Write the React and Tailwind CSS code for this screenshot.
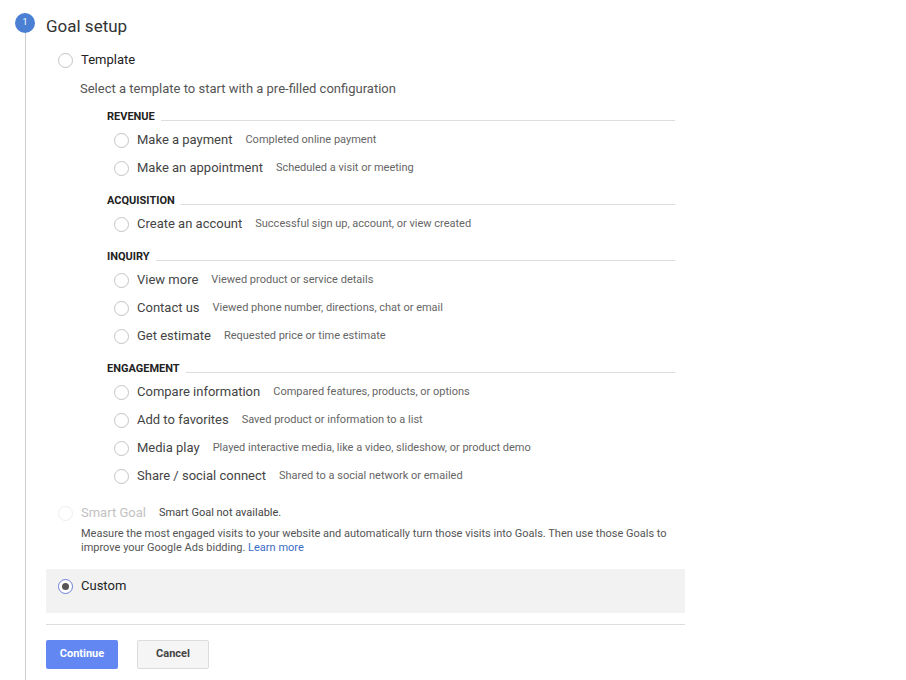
import React from "react";

const groups = [
  {
    title: "REVENUE",
    items: [
      ["Make a payment", "Completed online payment"],
      ["Make an appointment", "Scheduled a visit or meeting"],
    ],
  },
  {
    title: "ACQUISITION",
    items: [["Create an account", "Successful sign up, account, or view created"]],
  },
  {
    title: "INQUIRY",
    items: [
      ["View more", "Viewed product or service details"],
      ["Contact us", "Viewed phone number, directions, chat or email"],
      ["Get estimate", "Requested price or time estimate"],
    ],
  },
  {
    title: "ENGAGEMENT",
    items: [
      ["Compare information", "Compared features, products, or options"],
      ["Add to favorites", "Saved product or information to a list"],
      ["Media play", "Played interactive media, like a video, slideshow, or product demo"],
      ["Share / social connect", "Shared to a social network or emailed"],
    ],
  },
];

// plain radio circle
const Radio = ({ checked, disabled }) => (
  <span
    className={
      "flex h-[15px] w-[15px] shrink-0 items-center justify-center rounded-full border bg-white " +
      (checked ? "border-[#6b7fd6]" : disabled ? "border-[#eeeeee]" : "border-[#c4c4c4]")
    }
  >
    {checked && <span className="h-[7px] w-[7px] rounded-full bg-[#555]" />}
  </span>
);

export default function App() {
  return (
    <div
      className="flex min-h-[680px] w-[906px] bg-white text-[#333]"
      style={{ fontFamily: "Roboto, 'Liberation Sans', sans-serif" }}
    >
      {/* step marker + line */}
      <div className="flex w-[46px] shrink-0 flex-col">
        <div className="ml-[15px] mt-[13px] flex h-[20px] w-[20px] items-center justify-center rounded-full bg-[#4a7fd3] text-[9px] text-white">
          1
        </div>
        <div className="ml-[25px] w-px flex-1 bg-[#cccccc]" />
      </div>

      <div className="w-[639px] pt-[15px]">
        <div className="flex h-[24px] items-center text-[17px] text-[#333]">Goal setup</div>

        {/* template */}
        <div className="mt-[11px] flex h-[20px] items-center gap-[8px] pl-[12px]">
          <Radio />
          <span className="text-[13px] text-[#222]">Template</span>
        </div>
        <div className="mt-[10px] flex h-[18px] items-center pl-[34px] text-[13px] text-[#555]">
          Select a template to start with a pre-filled configuration
        </div>

        <div className="pl-[61px] pr-[10px]">
          {groups.map((g) => (
            <div key={g.title} className="mt-[10px]">
              <div className="flex h-[18px] items-center gap-[6px]">
                <span className="text-[11px] font-bold text-[#222]">{g.title}</span>
                <span className="mt-[7px] h-px flex-1 bg-[#dddddd]" />
              </div>
              {g.items.map(([label, desc]) => (
                <div key={label} className="flex h-[28px] items-center pl-[7px]">
                  <Radio />
                  <span className="ml-[8px] text-[13px] text-[#444]">{label}</span>
                  <span className="ml-[13px] text-[11px] text-[#666]">{desc}</span>
                </div>
              ))}
            </div>
          ))}
        </div>

        {/* smart goal */}
        <div className="mt-[13px] flex h-[20px] items-center pl-[12px]">
          <Radio disabled />
          <span className="ml-[8px] text-[13px] text-[#c2c2c2]">Smart Goal</span>
          <span className="ml-[13px] text-[11px] text-[#444]">Smart Goal not available.</span>
        </div>
        <div className="mt-[4px] pl-[35px] pr-[10px] text-[11px] leading-[14px] text-[#555]">
          <div>Measure the most engaged visits to your website and automatically turn those visits into Goals. Then use those Goals to</div>
          <div>
            improve your Google Ads bidding. <a className="text-[#3b6cc4]">Learn more</a>
          </div>
        </div>

        {/* custom */}
        <div className="mt-[14px] h-[44px] bg-[#f2f2f2] pt-[7px]">
          <div className="flex h-[20px] items-center gap-[8px] pl-[12px]">
            <Radio checked />
            <span className="text-[13px] text-[#222]">Custom</span>
          </div>
        </div>

        <div className="mt-[11px] h-px bg-[#dddddd]" />

        <div className="mt-[15px] flex gap-[19px]">
          <button className="h-[29px] w-[72px] rounded-[2px] bg-[#6286f2] text-[11px] font-bold text-white">
            Continue
          </button>
          <button className="h-[29px] w-[72px] rounded-[2px] border border-[#dcdcdc] bg-[#f5f5f5] text-[11px] font-bold text-[#444]">
            Cancel
          </button>
        </div>
      </div>
    </div>
  );
}
